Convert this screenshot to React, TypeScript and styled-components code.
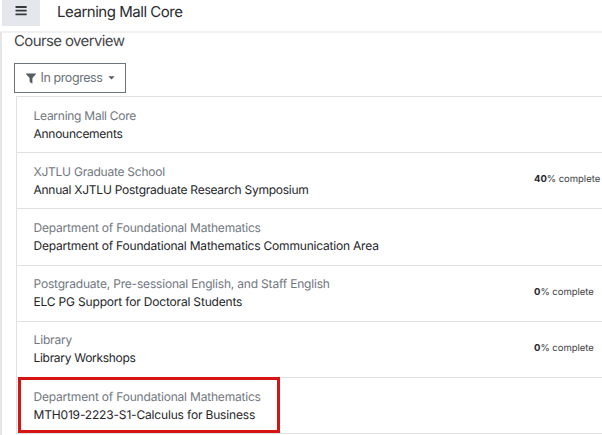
import React from "react";
import styled, { createGlobalStyle } from "styled-components";

const GlobalStyle = createGlobalStyle`
  * { box-sizing: border-box; }
  body {
    margin: 0;
    overflow: hidden;
    background: #fff;
    font-family: Inter, "Liberation Sans", sans-serif;
    text-rendering: geometricPrecision;
  }
`;

const Page = styled.div`
  width: 602px;
  height: 435px;
  display: flex;
  flex-direction: column;
  overflow: hidden;
`;

const TopBar = styled.header`
  height: 31px;
  flex: none;
  display: flex;
  align-items: flex-start;
  padding-left: 2px;
`;

const MenuButton = styled.button`
  width: 38px;
  height: 26px;
  padding: 0 0 0 13px;
  border: 0;
  background: #e4e7eb;
  display: flex;
  align-items: flex-start;
  svg { display: block; margin-top: 5px; }
`;

const SiteName = styled.div`
  margin-left: 17px;
  font-size: 15px;
  line-height: 24px;
  letter-spacing: -0.47px;
  color: #2a2b2e;
  white-space: nowrap;
`;

const Content = styled.main`
  flex: 1;
  border-top: 2px solid #f1f1f2;
  border-left: 2px solid #e6e6e7;
  padding-left: 12px;
`;

const Heading = styled.h1`
  margin: 0;
  height: 30px;
  font-size: 15px;
  font-weight: 400;
  line-height: 15px;
  letter-spacing: -0.62px;
  color: #444548;
`;

const FilterButton = styled.button`
  width: 112px;
  height: 30px;
  padding: 0 0 0 11px;
  border: 1px solid #6d747c;
  background: #fff;
  display: flex;
  align-items: center;
  font: 400 12.5px/28px Inter, sans-serif;
  letter-spacing: -0.42px;
  color: #6b7178;
  svg { display: block; flex: none; }
  span { margin: 0 6px 0 4.5px; white-space: nowrap; }
`;

const List = styled.ul`
  list-style: none;
  margin: 3px 0 0 2px;
  padding: 0;
  border-left: 1px solid #dfe0e1;
  border-bottom: 1px solid #dfe0e1;
`;

const Row = styled.li<{ $tall?: boolean }>`
  position: relative;
  height: ${(p) => (p.$tall ? 57 : 56)}px;
  border-top: 1px solid #dfe0e1;
  padding: 0 0 0 16.5px;
  display: grid;
  grid-template-columns: 500.5px 1fr;
  align-items: start;
`;

const CourseText = styled.div<{ $raised?: boolean }>`
  padding-top: ${(p) => (p.$raised ? 9 : 10)}px;
`;

const Line = styled.div<{ $strong?: boolean; $track: number }>`
  font-size: 12px;
  line-height: 18px;
  letter-spacing: ${(p) => p.$track}px;
  color: ${(p) => (p.$strong ? "#242528" : "#71777e")};
  white-space: nowrap;
`;

const Progress = styled.div`
  padding-top: 20px;
  font-size: 9.5px;
  line-height: 14px;
  letter-spacing: -0.03px;
  color: #3c3e41;
  white-space: nowrap;
  b { font-weight: 700; color: #242528; }
`;

const Highlight = styled.div`
  position: absolute;
  left: 1px;
  top: -1px;
  width: 262px;
  height: 56px;
  border: 3px solid #d81313;
`;

interface Course {
  category: string;
  name: string;
  categoryTrack: number;
  nameTrack: number;
  progress?: number;
  tall?: boolean;
  raised?: boolean;
  highlighted?: boolean;
}

const courses: Course[] = [
  { category: "Learning Mall Core", name: "Announcements", categoryTrack: -0.26, nameTrack: -0.26 },
  { category: "XJTLU Graduate School", name: "Annual XJTLU Postgraduate Research Symposium", categoryTrack: -0.24, nameTrack: -0.25, progress: 40 },
  { category: "Department of Foundational Mathematics", name: "Department of Foundational Mathematics Communication Area", categoryTrack: -0.19, nameTrack: -0.2, tall: true },
  { category: "Postgraduate, Pre-sessional English, and Staff English", name: "ELC PG Support for Doctoral Students", categoryTrack: -0.19, nameTrack: -0.18, progress: 0, raised: true },
  { category: "Library", name: "Library Workshops", categoryTrack: -0.15, nameTrack: -0.3, progress: 0, raised: true },
  { category: "Department of Foundational Mathematics", name: "MTH019-2223-S1-Calculus for Business", categoryTrack: -0.19, nameTrack: -0.17, highlighted: true },
];

export default function App() {
  return (
    <>
      <GlobalStyle />
      <Page>
        <TopBar>
          <MenuButton aria-label="Menu">
            <svg width="12" height="12" viewBox="0 0 12 12" fill="#333a40">
              <rect x="0.5" y="1" width="11.2" height="1.9" rx="0.4" />
              <rect x="0.5" y="4.7" width="11.2" height="1.9" rx="0.4" />
              <rect x="0.5" y="8.4" width="11.2" height="1.9" rx="0.4" />
            </svg>
          </MenuButton>
          <SiteName>Learning Mall Core</SiteName>
        </TopBar>
        <Content>
          <Heading>Course overview</Heading>
          <FilterButton>
            <svg width="10" height="11" viewBox="0 0 10 11" fill="#555c63">
              <path d="M.4.5h9.2c.4 0 .5.5.2.8L6.4 4.9v5c0 .5-.4.7-.8.4L3.9 8.9a.8.8 0 0 1-.3-.6V4.9L.2 1.3C-.1 1 0 .5.4.5Z" />
            </svg>
            <span>In progress</span>
            <svg width="7" height="4" viewBox="0 0 7 4" fill="#555c63">
              <path d="M.3.2h6.4L3.5 3.6Z" />
            </svg>
          </FilterButton>
          <List>
            {courses.map((c) => (
              <Row key={c.name} $tall={c.tall}>
                <CourseText $raised={c.raised}>
                  <Line $track={c.categoryTrack}>{c.category}</Line>
                  <Line $strong $track={c.nameTrack}>{c.name}</Line>
                </CourseText>
                {c.progress !== undefined && (
                  <Progress>
                    <b>{c.progress}</b>% complete
                  </Progress>
                )}
                {c.highlighted && <Highlight />}
              </Row>
            ))}
          </List>
        </Content>
      </Page>
    </>
  );
}
